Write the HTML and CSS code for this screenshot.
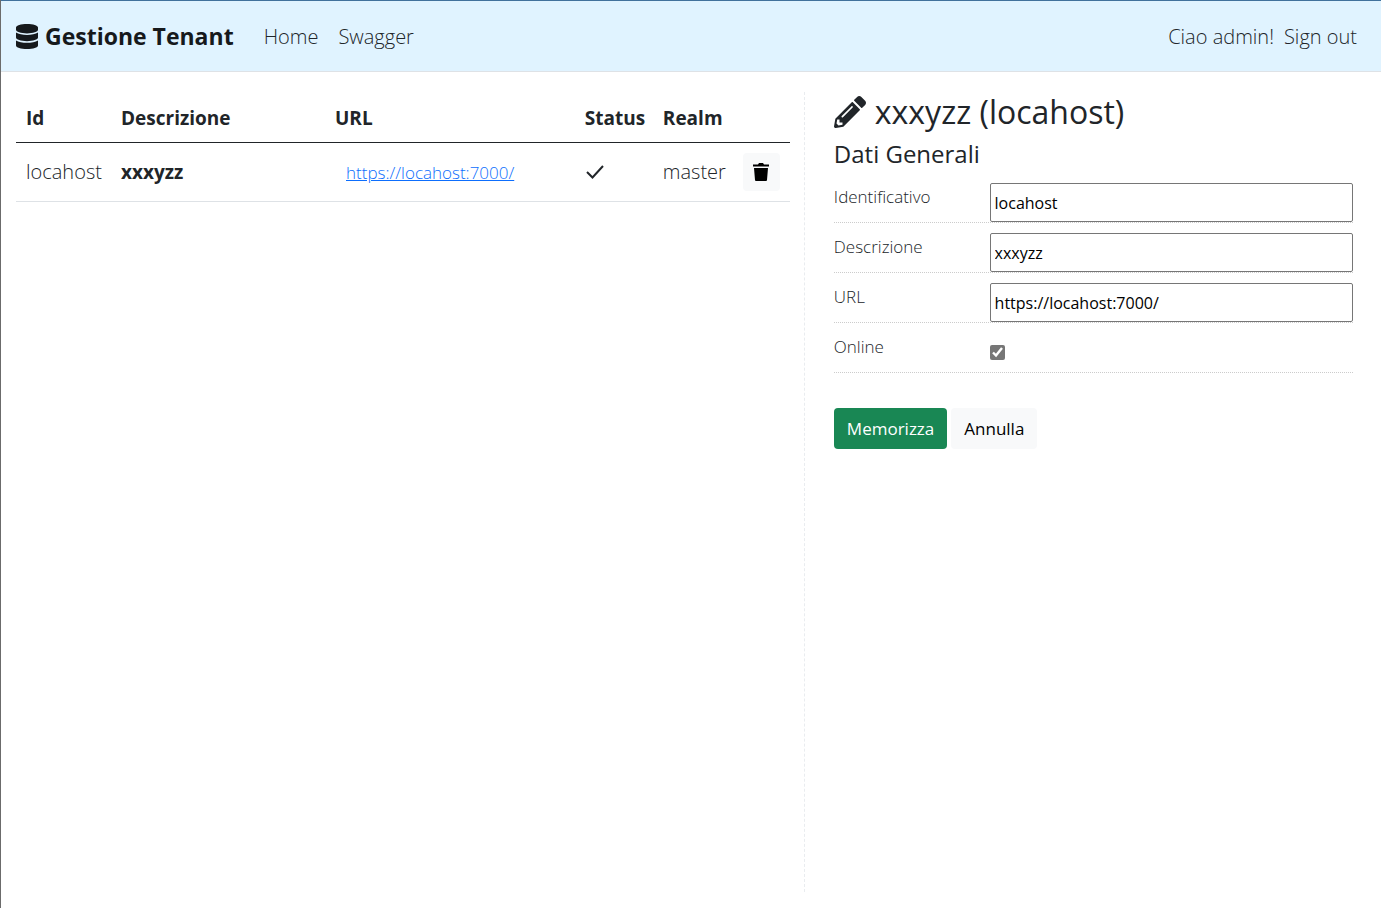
FILE: index.html
```html
<!DOCTYPE html>
<html lang="it">
<head>
<meta charset="utf-8">
<meta name="viewport" content="width=device-width, initial-scale=1">
<title>Gestione Tenant</title>
<link rel="stylesheet" href="styles.css">
</head>
<body>
<header class="navbar">
  <a class="brand" href="#">
    <svg class="brand-icon" viewBox="0 0 448 512" preserveAspectRatio="none" aria-hidden="true"><path d="M448 73.143v45.714C448 159.143 347.667 192 224 192S0 159.143 0 118.857V73.143C0 32.857 100.333 0 224 0s224 32.857 224 73.143zM448 176v102.857C448 319.143 347.667 352 224 352S0 319.143 0 278.857V176c48.125 33.143 136.208 48.572 224 48.572S399.874 209.143 448 176zm0 160v102.857C448 479.143 347.667 512 224 512S0 479.143 0 438.857V336c48.125 33.143 136.208 48.572 224 48.572S399.874 369.143 448 336z"/></svg>
    Gestione Tenant
  </a>
  <nav class="menu">
    <a href="#">Home</a>
    <a href="#">Swagger</a>
  </nav>
  <div class="account">
    <span>Ciao admin!</span>
    <a href="#">Sign out</a>
  </div>
</header>
<main class="content">
  <section class="list">
    <table class="tenants">
      <colgroup>
        <col class="col-id"><col class="col-description"><col class="col-url"><col class="col-status"><col class="col-realm"><col class="col-action">
      </colgroup>
      <thead>
        <tr><th>Id</th><th>Descrizione</th><th>URL</th><th>Status</th><th>Realm</th><th></th></tr>
      </thead>
      <tbody>
        <tr>
          <td>locahost</td>
          <td class="strong">xxxyzz</td>
          <td><a class="tenant-link" href="#">https://locahost:7000/</a></td>
          <td><svg class="check-icon" viewBox="0 0 20 16" role="img" aria-label="Online"><path d="M2 8l5.500 5.500L18 2"/></svg></td>
          <td>master</td>
          <td><button class="delete" type="button" aria-label="Elimina"><svg class="trash-icon" viewBox="0 0 16 18" aria-hidden="true"><path d="M0 1.500h5L6 0h4l1 1.500h5V3.500H0zM1 5h14l-1 12q0 1-1 1H3q-1 0-1-1z"/></svg></button></td>
        </tr>
      </tbody>
    </table>
  </section>
  <section class="detail">
    <h2 class="title">
      <svg class="pencil-icon" viewBox="0 0 512 512" aria-hidden="true"><path d="M497.9 142.1l-46.1 46.1c-4.7 4.7-12.3 4.7-17 0l-111-111c-4.7-4.7-4.7-12.3 0-17l46.1-46.1c18.7-18.7 49.1-18.7 67.9 0l60.1 60.1c18.8 18.7 18.8 49.1 0 67.9zM284.2 99.8L21.6 362.4.4 483.9c-2.9 16.4 11.4 30.6 27.8 27.8l121.5-21.3 262.6-262.6c4.7-4.7 4.7-12.3 0-17l-111-111c-4.8-4.7-12.4-4.7-17.1 0zM124.1 339.900c-5.500-5.500-5.500-14.300 0-19.800l154-154c5.500-5.500 14.300-5.500 19.800 0s5.500 14.300 0 19.800l-154 154c-5.500 5.500-14.300 5.500-19.800 0zM88 424h48v36.300l-64.500 11.300-31.100-31.100L51.700 376H88v48z"/></svg>
      xxxyzz (locahost)
    </h2>
    <form>
      <h4 class="subtitle">Dati Generali</h4>
      <div class="field"><label for="tenant-id">Identificativo</label><input class="text" id="tenant-id" type="text" value="locahost"></div>
      <div class="field"><label for="tenant-description">Descrizione</label><input class="text" id="tenant-description" type="text" value="xxxyzz"></div>
      <div class="field"><label for="tenant-url">URL</label><input class="text" id="tenant-url" type="text" value="https://locahost:7000/"></div>
      <div class="field"><label for="tenant-online">Online</label><input class="tick" id="tenant-online" type="checkbox" checked></div>
      <div class="actions">
        <button class="btn btn-save" type="button">Memorizza</button>
        <button class="btn btn-cancel" type="button">Annulla</button>
      </div>
    </form>
  </section>
</main>
</body>
</html>
```
FILE: styles.css
```css
* { box-sizing: border-box; }
body {
  margin: 0;
  min-height: 100vh;
  display: flex;
  flex-direction: column;
  border-left: 1px solid #6b6b6b;
  background: #fff;
  color: #212529;
  font-family: "Open Sans", "Noto Sans", sans-serif;
  font-size: 20px;
  font-weight: 300;
  line-height: 30px;
}
a { color: inherit; text-decoration: none; }
svg { fill: currentColor; }
.navbar {
  display: flex;
  align-items: center;
  min-height: 72px;
  padding: 0 24px 0 15px;
  border-top: 1px solid #41719c;
  border-bottom: 1px solid #dee2e6;
  background: #e0f3ff;
}
.brand {
  display: flex;
  align-items: center;
  gap: 7px;
  color: #16191c;
  font-size: 23px;
  font-weight: 700;
}
.brand-icon { width: 22px; height: 25px; }
.menu, .account { display: flex; padding-top: 2px; }
.menu { gap: 20px; margin-left: 30px; }
.account { gap: 10px; margin-left: auto; }
.content { flex: 1; display: flex; padding: 20px 28px 16px 15px; }
.list { flex: 1; padding-right: 14px; border-right: 1px dashed #e9ecef; }
.tenants { width: 100%; table-layout: fixed; border-collapse: collapse; }
.tenants th, .tenants td { padding: 10px; text-align: left; white-space: nowrap; }
.tenants th { padding: 11px 10px 9px; border-bottom: 1px solid #212529; font-size: 19px; font-weight: 700; }
.tenants td { border-bottom: 1px solid #dee2e6; }
.tenants .strong { font-size: 19px; font-weight: 700; }
.col-id { width: 95px; }
.col-description { width: 214px; }
.col-status { width: 78px; }
.col-realm { width: 80px; }
.col-action { width: 57px; }
.tenant-link { padding-left: 11px; color: #0d6efd; font-size: 17px; text-decoration: underline; }
.check-icon { display: block; width: 20px; height: 16px; fill: none; stroke: currentColor; stroke-width: 2; }
.delete {
  display: grid;
  place-items: center;
  width: 37px;
  height: 38px;
  padding: 0;
  border: 0;
  border-radius: 4px;
  background: #f8f9fa;
  color: #000;
}
.trash-icon { width: 16px; height: 18px; }
.detail { flex: 0 0 41%; padding-left: 29px; }
.title {
  display: flex;
  align-items: center;
  gap: 9px;
  margin: 0 0 7px;
  font-size: 32px;
  font-weight: 500;
  line-height: 40px;
}
.pencil-icon { width: 32px; height: 32px; }
.subtitle { margin: 0 0 14px; font-size: 24px; font-weight: 500; line-height: 30px; }
.field {
  display: grid;
  grid-template-columns: 30% 1fr;
  min-height: 40px;
  margin-bottom: 10px;
  border-bottom: 1px dotted #ccc;
  font-size: 17px;
  line-height: 28px;
}
.text {
  width: 100%;
  height: 39px;
  padding: 1px 4px;
  border: 1px solid #767676;
  border-radius: 2px;
  background: #fff;
  color: #000;
  font: 400 16px "Open Sans", "Noto Sans", sans-serif;
}
.tick { width: 15px; height: 15px; margin: 12px 0 0; accent-color: #767676; }
.actions { display: flex; gap: 4px; margin-top: 35px; }
.btn {
  height: 41px;
  padding: 0 13px;
  border: 0;
  border-radius: 4px;
  font: 400 17px "Open Sans", "Noto Sans", sans-serif;
}
.btn-save { background: #198754; color: #fff; }
.btn-cancel { background: #f8f9fa; color: #000; }
```
